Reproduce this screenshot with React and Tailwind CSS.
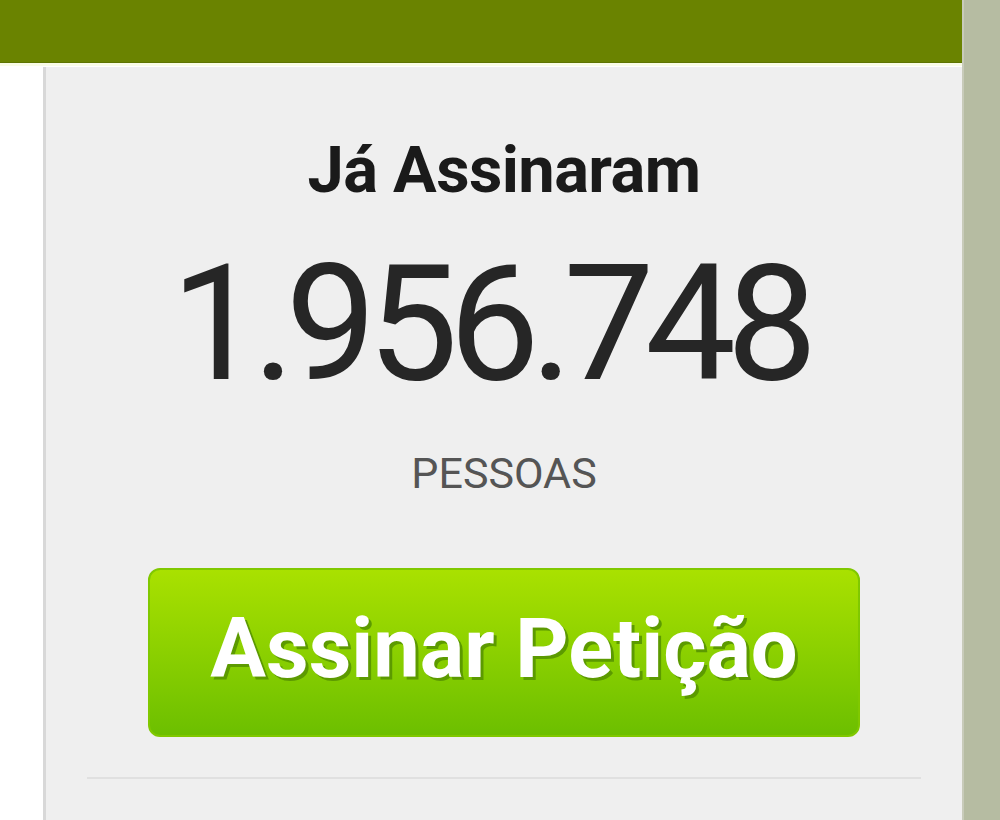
export default function App() {
  return (
    <div className="w-[1000px] h-[820px] flex overflow-hidden bg-white" style={{ fontFamily: 'Roboto, "Noto Sans", sans-serif' }}>
      <div className="flex-1 flex flex-col">
        <div className="h-[63px] bg-[#6a8300] border-b border-[#5d7400]" />
        <div className="h-[3px] bg-[#f9fce6]" />
        <div className="flex flex-1">
          <div className="w-[43px] bg-white" />
          <div className="flex-1 mt-[1px] bg-[#efefef] border-l-[3px] border-[#d8d8d8] flex flex-col items-center">
            <div className="mt-[71px] text-[65px] leading-none font-bold tracking-[-0.6px] text-[#1a1a1a]">Já Assinaram</div>
            <div className="mt-[40px] text-[162px] leading-none font-normal tracking-[-9.5px] text-[#262626] pr-[29px]">1.956.748</div>
            <div className="mt-[47px] text-[43px] leading-none text-[#555555]">PESSOAS</div>
            <div className="mt-[73px] w-[712px] h-[169px] rounded-[12px] border-2 border-[#80c800] bg-gradient-to-b from-[#a9e100] to-[#6cbf00] flex items-center justify-center pb-[8px]">
              <span className="text-[83px] leading-none font-bold text-white [text-shadow:3px_3px_0_#5c9a00]">Assinar Petição</span>
            </div>
            <div className="mt-[40px] w-[834px] h-[2px] bg-[#e0e0e0]" />
          </div>
        </div>
      </div>
      <div className="w-[38px] bg-[#b6bca2] border-l-2 border-[#c8cbba]" />
    </div>
  );
}
